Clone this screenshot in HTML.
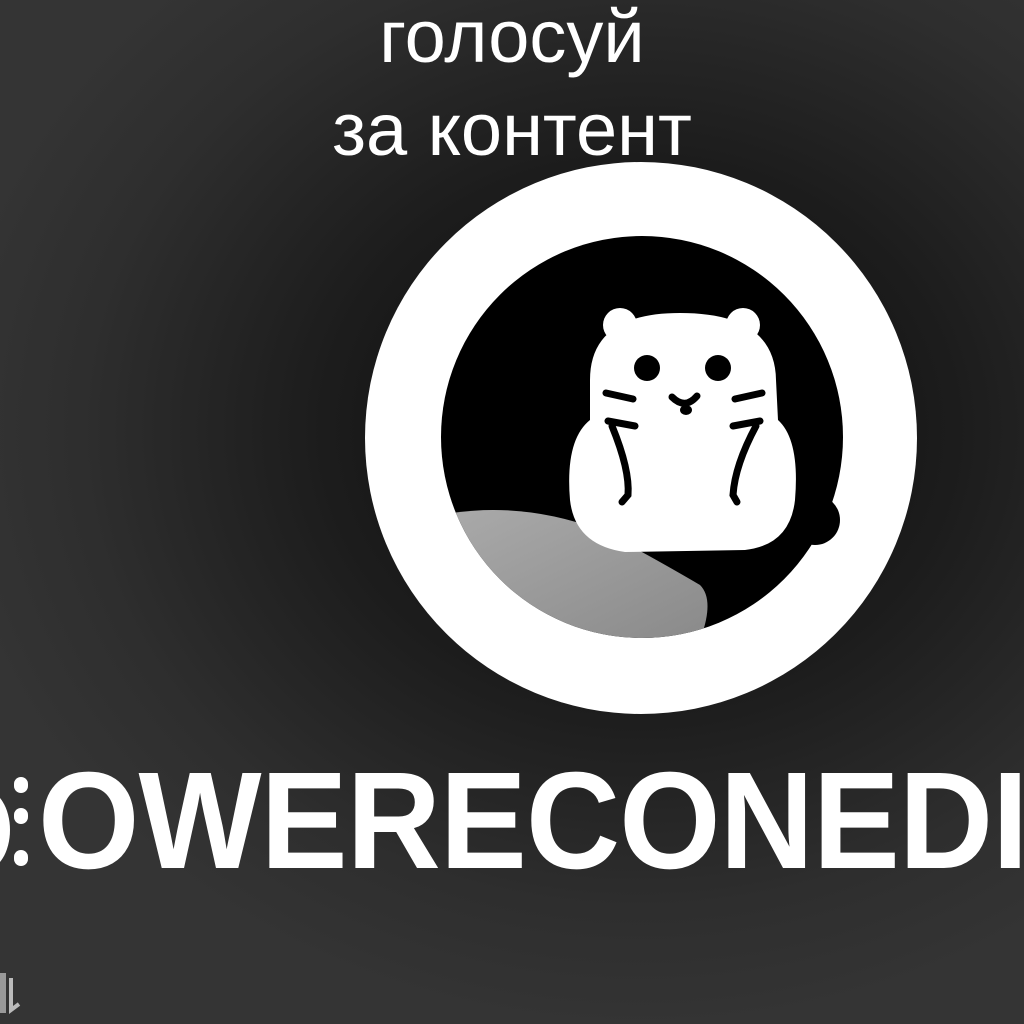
<!DOCTYPE html>
<html><head><meta charset="utf-8"><style>
html,body{margin:0;padding:0}
body{width:1024px;height:1024px;overflow:hidden;position:relative;
background:radial-gradient(ellipse 700px 600px at 640px 430px,#0c0c0c 0%,#1c1c1c 45%,#2e2e2e 80%,#343434 100%);
font-family:"Liberation Sans",sans-serif;}
.t{position:absolute;color:#fff;font-size:74px;width:1024px;left:0;text-align:center;line-height:1}
.big{position:absolute;left:38px;top:752px;color:#fff;font-weight:bold;font-size:138px;line-height:1;white-space:nowrap;transform:scaleX(0.945);transform-origin:0 0;letter-spacing:-1px}
.dot{position:absolute;left:14px;width:14px;height:16px;border-radius:7px;background:#fff}
</style></head><body>
<div class="t" style="top:0px;left:0">голосуй</div>
<div class="t" style="top:93px;left:0">за контент</div>
<svg width="1024" height="1024" style="position:absolute;left:0;top:0">
<defs><clipPath id="c"><circle cx="642" cy="437" r="201"/></clipPath>
<linearGradient id="g" x1="0" y1="0" x2="1" y2="1"><stop offset="0" stop-color="#aaa"/><stop offset="1" stop-color="#8a8a8a"/></linearGradient></defs>
<circle cx="641" cy="438" r="276" fill="#fff"/>
<circle cx="642" cy="437" r="201" fill="#000"/>
<g clip-path="url(#c)">
<path d="M440 515 Q520 500 600 530 Q640 550 700 585 Q715 600 700 640 L440 640Z" fill="url(#g)"/>
</g>
<circle cx="815" cy="520" r="25" fill="#000"/>
<circle cx="620" cy="325" r="17" fill="#fff"/>
<circle cx="743" cy="325" r="17" fill="#fff"/>
<path d="M590 380 Q590 313 680 313 Q775 313 776 380 L778 420 Q800 440 795 500 Q790 545 745 550 L625 552 Q575 545 570 500 Q565 440 590 420Z" fill="#fff"/>
<circle cx="647" cy="368" r="13" fill="#000"/>
<circle cx="718" cy="368" r="13" fill="#000"/>
<g stroke="#000" stroke-width="7" stroke-linecap="round" fill="none">
<path d="M606 393 L633 399"/><path d="M608 421 L635 426"/>
<path d="M762 393 L735 399"/><path d="M760 421 L733 426"/>
<path d="M612 426 Q630 470 628 495 L622 502"/>
<path d="M756 426 Q735 465 733 495 L737 502"/>
<path d="M672 397 Q685 410 697 396"/>
</g>
<ellipse cx="686" cy="410" rx="6" ry="5" fill="#000"/>
<rect x="0" y="973" width="6" height="40" fill="#999"/>
<path d="M11 978 L11 1010 L19 1004" stroke="#bbb" stroke-width="4" fill="none"/>
</svg>
<div class="big">OWERECONEDI</div>
<div class="dot" style="top:777px"></div>
<div class="dot" style="top:808px"></div>
<div class="dot" style="top:850px"></div>
<div style="position:absolute;left:-40px;top:790px;width:30px;height:60px;border:10px solid #fff;border-radius:50%;border-left-color:transparent"></div>
</body></html>
